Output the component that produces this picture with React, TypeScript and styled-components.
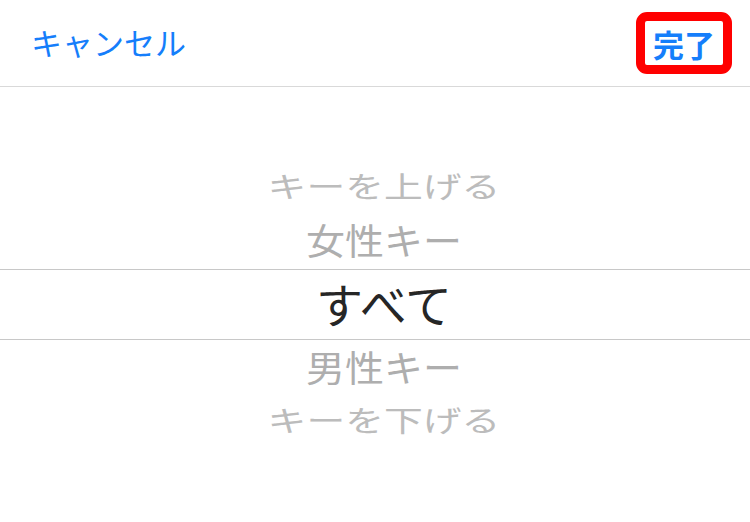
import React from 'react';
import styled, { createGlobalStyle } from 'styled-components';

const GlobalStyle = createGlobalStyle`
  html, body {
    margin: 0;
    padding: 0;
    background: #ffffff;
  }
  body {
    font-family: "Noto Sans CJK JP", "Noto Sans", sans-serif;
  }
`;

const Screen = styled.div`
  width: 750px;
  height: 522px;
  background: #ffffff;
  display: flex;
  flex-direction: column;
  overflow: hidden;
`;

const Toolbar = styled.div`
  height: 87px;
  border-bottom: 1px solid #d9d9d9;
  display: flex;
  align-items: center;
  justify-content: space-between;
  padding: 0 18px 0 31px;
  box-sizing: border-box;
`;

const BarButton = styled.button<{ $bold?: boolean }>`
  border: none;
  background: none;
  padding: 0;
  font-family: inherit;
  font-size: 31px;
  font-weight: ${(p) => (p.$bold ? 700 : 400)};
  color: #157efb;
  line-height: 1;
  cursor: pointer;
`;

const CancelButton = styled(BarButton)`
  margin-bottom: 4px;
`;

const Highlight = styled.div`
  border: 9px solid #ff0000;
  border-radius: 11px;
  height: 44px;
  padding: 0 8px;
  display: flex;
  align-items: center;
  justify-content: center;
`;

const Picker = styled.div`
  flex: 1;
  display: flex;
  flex-direction: column;
  padding-top: 75px;
`;

const Row = styled.div<{ $height: number; $selected?: boolean }>`
  height: ${(p) => p.$height}px;
  padding-left: 18px;
  display: flex;
  align-items: center;
  justify-content: center;
  border-top: ${(p) => (p.$selected ? '1px solid #c8c8c8' : 'none')};
  border-bottom: ${(p) => (p.$selected ? '1px solid #c8c8c8' : 'none')};
`;

const Label = styled.span<{ $size: number; $squash: number; $color: string }>`
  display: inline-block;
  font-size: ${(p) => p.$size}px;
  line-height: 1;
  color: ${(p) => p.$color};
  transform: translateY(-2px) scaleY(${(p) => p.$squash});
  white-space: nowrap;
`;

const items = [
  { text: 'キーを上げる', height: 51, size: 38.8, squash: 0.75, color: '#bcbcbc' },
  { text: '女性キー', height: 56, size: 39, squash: 0.94, color: '#aeaeae' },
  { text: 'すべて', height: 69, size: 47, squash: 1, color: '#262626', selected: true },
  { text: '男性キー', height: 56, size: 39, squash: 0.94, color: '#aeaeae' },
  { text: 'キーを下げる', height: 51, size: 38.8, squash: 0.75, color: '#bcbcbc' },
];

export default function App() {
  return (
    <>
      <GlobalStyle />
      <Screen>
        <Toolbar>
          <CancelButton>キャンセル</CancelButton>
          <Highlight>
            <BarButton $bold>完了</BarButton>
          </Highlight>
        </Toolbar>
        <Picker>
          {items.map((it) => (
            <Row key={it.text} $height={it.height} $selected={it.selected}>
              <Label $size={it.size} $squash={it.squash} $color={it.color}>
                {it.text}
              </Label>
            </Row>
          ))}
        </Picker>
      </Screen>
    </>
  );
}
